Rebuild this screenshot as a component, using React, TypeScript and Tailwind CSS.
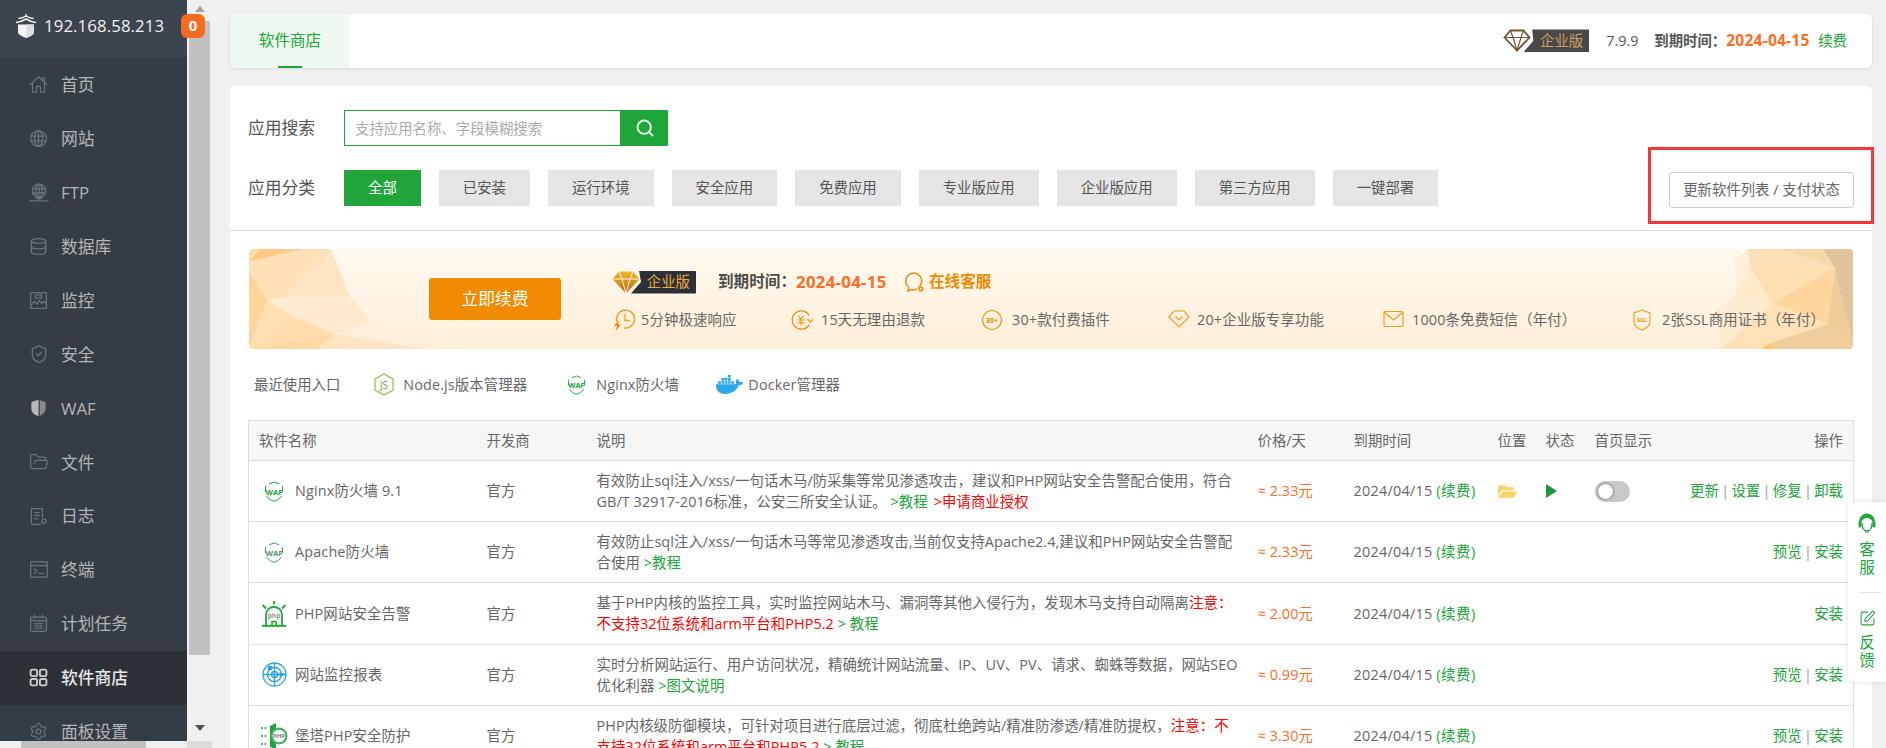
import React from "react";
import { Search, ShieldCheck, FolderOpen, Settings, Database, SquarePen } from "lucide-react";
import { FaFolderOpen, FaDocker } from "react-icons/fa";

const G = "#20a53a";
const O = "#f59a23";

const stroke = { fill: "none", stroke: "currentColor", strokeWidth: 1.6, strokeLinejoin: "round" as const, strokeLinecap: "round" as const };

function HomeI() {
  return (
    <svg width="19" height="19" viewBox="0 0 24 24" {...stroke}>
      <path d="M1.5 12 12 2.5 22.5 12M16.5 6.5V3.5H19.5V9.5M4.5 10.5V21.5H9.5V14.5H14.5V21.5H19.5V10.5" />
    </svg>
  );
}
function GlobeI() {
  return (
    <svg width="19" height="19" viewBox="0 0 24 24" {...stroke}>
      <circle cx="12" cy="12" r="10" />
      <ellipse cx="12" cy="12" rx="5" ry="10" />
      <path d="M12 2V22M2.5 9H21.5M2.5 15H21.5" />
    </svg>
  );
}
function FtpI() {
  return (
    <svg width="20" height="20" viewBox="0 0 24 24" {...stroke}>
      <circle cx="12" cy="9.5" r="8" />
      <ellipse cx="12" cy="9.5" rx="4" ry="8" />
      <path d="M12 1.5V21M4 7H20M4 12H20M1 21.5H23" />
      <path d="M8 18.5H16" />
    </svg>
  );
}
function MonitorI() {
  return (
    <svg width="19" height="19" viewBox="0 0 24 24" {...stroke}>
      <rect x="2" y="2" width="20" height="20" />
      <path d="M2 18 7 13 10 17 13 12 16 16 19 13 22 16" />
      <rect x="8" y="5" width="8" height="4" />
    </svg>
  );
}
function WafI() {
  return (
    <svg width="19" height="20" viewBox="0 0 24 24">
      <path d="M12 1.5 3 4.5V13c0 4.5 4 8 9 9.5Z" fill="#b5b8ba" />
      <path d="M13.5 1.8 21 4.5V13c0 4-3 7.2-7.5 9Z" fill="#85898d" />
    </svg>
  );
}
function LogI() {
  return (
    <svg width="19" height="19" viewBox="0 0 24 24" {...stroke}>
      <path d="M15 22H5a2 2 0 0 1-2-2V2h14v11" />
      <path d="M7 7H13M7 11H13M7 15H11" />
      <circle cx="19" cy="18" r="2.6" />
    </svg>
  );
}
function TermI() {
  return (
    <svg width="20" height="19" viewBox="0 0 24 24" {...stroke}>
      <rect x="1.5" y="2.5" width="21" height="19" />
      <path d="M1.5 7H22.5" />
      <path d="M6 11 9.5 14 6 17M12 17H18" />
    </svg>
  );
}
function CalI() {
  return (
    <svg width="19" height="19" viewBox="0 0 24 24" {...stroke}>
      <rect x="2" y="4" width="20" height="18" rx="2" />
      <path d="M7 1.5V5M17 1.5V5M2 8.5H22" />
      <path d="M6 12H18M6 15H18M6 18H18M9 11V19M12 11V19M15 11V19" strokeWidth="1" />
    </svg>
  );
}
function GridI() {
  return (
    <svg width="19" height="19" viewBox="0 0 24 24" fill="none" stroke="currentColor" strokeWidth="2.4">
      <rect x="2" y="2" width="8.2" height="8.2" rx="2" />
      <rect x="13.8" y="2" width="8.2" height="8.2" rx="2" />
      <rect x="2" y="13.8" width="8.2" height="8.2" rx="2" />
      <rect x="13.8" y="13.8" width="8.2" height="8.2" rx="2" />
    </svg>
  );
}

const menu: { label: string; icon: React.ReactNode; active?: boolean }[] = [
  { label: "首页", icon: <HomeI /> },
  { label: "网站", icon: <GlobeI /> },
  { label: "FTP", icon: <FtpI /> },
  { label: "数据库", icon: <Database size={19} strokeWidth={1.7} /> },
  { label: "监控", icon: <MonitorI /> },
  { label: "安全", icon: <ShieldCheck size={20} strokeWidth={1.6} /> },
  { label: "WAF", icon: <WafI /> },
  { label: "文件", icon: <FolderOpen size={20} strokeWidth={1.5} /> },
  { label: "日志", icon: <LogI /> },
  { label: "终端", icon: <TermI /> },
  { label: "计划任务", icon: <CalI /> },
  { label: "软件商店", icon: <GridI />, active: true },
  { label: "面板设置", icon: <Settings size={19} strokeWidth={1.5} /> },
];

function Logo() {
  return (
    <svg width="22" height="24" viewBox="0 0 22 24" className="shrink-0">
      <path d="M3 10.5 H19 V18.5 C19 20.5 14 23 11 24 C8 23 3 20.5 3 18.5 Z" fill="#f4f4f4" />
      <path d="M11.5 10.5 H19 V18.5 C19 20.5 14.5 23 11.5 24 Z" fill="#dcdde0" />
      <path d="M1 8.5 Q6 8 11 5 Q16 8 21 8.5" fill="none" stroke="#f4f4f4" strokeWidth="1.5" />
      <path d="M3.5 4.5 Q8 4 11 2 Q14 4 18.5 4.5" fill="none" stroke="#f4f4f4" strokeWidth="1.3" />
      <path d="M11 0V2" stroke="#f4f4f4" strokeWidth="1.2" />
    </svg>
  );
}

function Sidebar() {
  return (
    <aside className="relative flex w-[212px] shrink-0 flex-col">
      <div className="flex min-h-0 flex-1">
        <nav className="flex w-[187px] flex-col overflow-hidden bg-[#353d44]">
          <div className="flex h-[58px] shrink-0 items-center gap-[7px] bg-[#3c444d] pl-[15px] pb-[6px] text-[16.8px] text-[#f2f2f2]">
            <Logo />
            <span className="tracking-[0.1px]">192.168.58.213</span>
          </div>
          {menu.map((m) => (
            <div
              key={m.label}
              className={`flex h-[53.9px] shrink-0 items-center pl-[29px] text-[16.8px] ${
                m.active ? "bg-[#2c3138] font-medium text-[#e6e6e6]" : "text-[#b3b6b9]"
              }`}
            >
              <span className={`flex w-[32px] shrink-0 ${m.active ? "text-[#c9cbcd]" : "text-[#6c7277]"}`}>{m.icon}</span>
              <span>{m.label}</span>
            </div>
          ))}
        </nav>
        <div className="ml-[2px] flex w-[21px] flex-col items-center justify-between pt-[6px] pb-[10px]">
          <div className="flex w-full flex-col items-center">
            <div className="h-0 w-0 border-x-[5.5px] border-b-[6px] border-x-transparent border-b-[#a3a3a3]" />
            <div className="mt-[9px] h-[634px] w-full bg-[#c1c1c1]" />
          </div>
          <div className="h-0 w-0 border-x-[5.5px] border-t-[6px] border-x-transparent border-t-[#505050]" />
        </div>
      </div>
      <div className="flex h-[7px] shrink-0">
        <div className="w-[187px] bg-[#f0f0f0] pl-[21px]">
          <div className="h-full w-[125px] bg-[#c1c1c1]" />
        </div>
        <div className="w-[25px] bg-[#dcdcdc]" />
      </div>
      <div className="absolute left-[181px] top-[14px] flex h-[24px] w-[24px] items-center justify-center rounded-[6px] bg-[#f96b22] pb-[2px] text-[15px] font-bold text-white">
        0
      </div>
    </aside>
  );
}

function TopDiamond() {
  return (
    <div className="flex h-[23px] w-[86px] items-stretch">
      <svg width="28" height="23" viewBox="0 0 28 23" className="relative z-10 shrink-0" fill="#fff" stroke="#6e5632" strokeWidth="1.8">
        <path d="M7.5 1.5H20.5L26.5 8.5 14 21.5 1.5 8.5Z" />
        <path d="M1.5 8.5H26.5M7.5 1.5 10 8.5 14 21.5 18 8.5 20.5 1.5" fill="none" strokeWidth="1.2" />
      </svg>
      <div className="-ml-[8px] flex flex-1 items-center justify-end bg-[#494846] pr-[6px] text-[14.4px] text-[#c9a063] [clip-path:polygon(9px_0,100%_0,100%_100%,0_100%,10px_50%)]">
        企业版
      </div>
    </div>
  );
}

function BannerDiamond() {
  return (
    <div className="flex h-[23px] w-[84px] items-stretch">
      <svg width="28" height="23" viewBox="0 0 28 23" className="relative z-10 shrink-0">
        <defs>
          <linearGradient id="gold" x1="0" y1="0" x2="0" y2="1">
            <stop offset="0" stopColor="#f7b52f" />
            <stop offset="1" stopColor="#b06d0a" />
          </linearGradient>
        </defs>
        <path d="M7 0.5H21L27.5 8 14 22.5 0.5 8Z" fill="url(#gold)" />
        <path d="M0.5 8H27.5M7 0.5 10 8 14 22.5 18 8 21 0.5" fill="none" stroke="#fff" strokeWidth="0.9" />
      </svg>
      <div className="-ml-[9px] flex flex-1 items-center justify-end rounded-r-[1px] bg-[#2c3038] pr-[6px] text-[14.4px] text-[#eba933] [clip-path:polygon(8px_0,100%_0,100%_100%,0_100%,10px_50%)]">
        企业版
      </div>
    </div>
  );
}

function BannerArtLeft() {
  return (
    <svg width="176" height="100" viewBox="0 0 176 100" className="absolute left-0 top-0">
      <path d="M0 0H11L0 13Z" fill="#ffdfae" />
      <path d="M0 13 11 0H54Z" fill="#ffc885" />
      <path d="M0 13 54 0H82L36 48 18 51 0 23Z" fill="#ffe0b6" />
      <path d="M82 0 101 48H36Z" fill="#ffe5c4" />
      <path d="M0 23 18 51 0 100Z" fill="#ffd49b" />
      <path d="M18 51 36 48 101 48 44 68Z" fill="#ffebd2" />
      <path d="M44 68 101 48 122 72 86 85Z" fill="#ffe8cc" />
      <path d="M18 51 44 68 0 100Z" fill="#ffdfb2" />
      <path d="M44 68 86 85 0 100Z" fill="#ffdcab" />
      <path d="M0 100 86 85 69 100Z" fill="#ffd8a4" />
      <path d="M86 85 69 100H98Z" fill="#ffe4bf" />
      <path d="M86 85 122 72 174 100Z" fill="#ffeeda" />
      <path d="M86 85 174 100H98Z" fill="#ffe5c5" />
    </svg>
  );
}

function BannerArtRight() {
  return (
    <svg width="139" height="100" viewBox="0 0 139 100" className="absolute right-0 top-0">
      <g transform="translate(5 0)">
        <path d="M16 11 29 0 31 19 16 46Z" fill="#fff0dc" />
        <path d="M29 0H60L116 19H31Z" fill="#fbe0b6" />
        <path d="M60 0H104L116 19Z" fill="#f6d9ab" />
        <path d="M31 19H116L53 54Z" fill="#fedfb2" />
        <path d="M116 19 109 75 53 54Z" fill="#fed59a" />
        <path d="M16 46 31 19 53 54Z" fill="#fee9c9" />
        <path d="M-4 63 16 46 53 54 3 100Z" fill="#ffebd0" />
        <path d="M53 54 109 75 51 94 43 100H3Z" fill="#ffe1b8" />
        <path d="M43 100 51 94 61 100Z" fill="#ffc66f" />
        <path d="M51 94 109 75 134 93V100H61Z" fill="#efcd9c" />
        <path d="M116 19 118 33 134 93 109 75Z" fill="#eecb97" />
        <path d="M104 0H134V93L118 33 116 19Z" fill="#dfc49c" />
      </g>
    </svg>
  );
}

function F1() {
  return (
    <svg width="24" height="24" viewBox="0 0 24 24" fill="none" stroke={O} strokeWidth="1.3">
      <path d="M5 14A9 9 0 1 1 12 20" />
      <path d="M13 6V12.5H18" />
      <path d="M7 12 2 18H5L3.5 23 9 16.5H6Z" fill="#f08a00" stroke="none" />
    </svg>
  );
}
function F2() {
  return (
    <svg width="22" height="22" viewBox="0 0 24 24" fill="none" stroke="#f08a00" strokeWidth="1.3">
      <path d="M20 7A10 10 0 1 0 20 17" />
      <path d="M8 7.5 11 11 14 7.5M7 12H15M7 15H15M11 11V18" strokeWidth="1.1" />
      <path d="M18 11 21 14 24 11" />
    </svg>
  );
}
function F3() {
  return (
    <svg width="22" height="22" viewBox="0 0 22 22" fill="none">
      <circle cx="11" cy="11" r="9.5" stroke="#f08a00" strokeWidth="1.1" />
      <text x="11" y="13.5" textAnchor="middle" fontSize="7" fontWeight="700" fill="#f08a00">30+</text>
    </svg>
  );
}
function F4() {
  return (
    <svg width="22" height="20" viewBox="0 0 22 20" fill="none" stroke={O} strokeWidth="1.2">
      <path d="M6 2H16L21 8 11 18 1 8Z" />
      <path d="M7.5 7.5 11 11 14.5 7.5" />
    </svg>
  );
}
function F5() {
  return (
    <svg width="21" height="18" viewBox="0 0 21 18" fill="none" stroke={O} strokeWidth="1.2">
      <rect x="1" y="1.5" width="19" height="15" rx="1" />
      <path d="M1 2 10.5 10 20 2" />
    </svg>
  );
}
function F6() {
  return (
    <svg width="20" height="22" viewBox="0 0 20 22" fill="none">
      <path d="M10 1 18 4V13C18 17 13 20 10 21 7 20 2 17 2 13V4Z" stroke={O} strokeWidth="1.1" />
      <text x="10" y="13" textAnchor="middle" fontSize="6" fontWeight="700" fill={O}>SSL</text>
    </svg>
  );
}

const feats: { w: string; pad: string; icon: React.ReactNode; text: string }[] = [
  { w: "w-[179px]", pad: "w-[29px]", icon: <F1 />, text: "5分钟极速响应" },
  { w: "w-[190px]", pad: "w-[30px]", icon: <F2 />, text: "15天无理由退款" },
  { w: "w-[187px]", pad: "w-[31px]", icon: <F3 />, text: "30+款付费插件" },
  { w: "w-[215px]", pad: "w-[29px]", icon: <F4 />, text: "20+企业版专享功能" },
  { w: "w-[249px]", pad: "w-[29px]", icon: <F5 />, text: "1000条免费短信（年付）" },
  { w: "w-[200px]", pad: "w-[30px]", icon: <F6 />, text: "2张SSL商用证书（年付）" },
];

function Banner() {
  return (
    <div className="relative mx-px mt-[18px] flex h-[100px] items-center overflow-hidden rounded-[4px] bg-gradient-to-b from-[#fff9f0] to-[#ffefd8]">
      <BannerArtLeft />
      <BannerArtRight />
      <div className="relative ml-[180px] flex h-[42px] w-[132px] shrink-0 items-center justify-center rounded-[3px] bg-[#f08a00] text-[16.8px] text-white">
        立即续费
      </div>
      <div className="relative ml-[51px] flex flex-col gap-[15px] pt-[3px]">
        <div className="flex h-[23px] items-center">
          <BannerDiamond />
          <span className="ml-[22px] w-[78px] text-[15.6px] font-bold text-[#4d4d4d]">到期时间：</span>
          <span className="w-[107px] text-[16.8px] font-bold tracking-[0.3px] text-[#fc6d26]">2024-04-15</span>
          <svg width="24" height="22" viewBox="0 0 24 22" fill="none" stroke="#f08a00" strokeWidth="1.5">
            <path d="M6 16.5A8 8 0 1 1 15.5 16.5" />
            <path d="M6 16.5 5 20 8.5 18.5C10.5 19.3 12.5 19 14.5 17.5" />
            <circle cx="18" cy="18" r="1.8" />
          </svg>
          <span className="ml-[2px] text-[15.6px] font-semibold text-[#f08a00]">在线客服</span>
        </div>
        <div className="flex h-[22px] items-center">
          {feats.map((f) => (
            <div key={f.text} className={`flex shrink-0 items-center ${f.w}`}>
              <span className={`flex shrink-0 ${f.pad}`}>{f.icon}</span>
              <span className="whitespace-nowrap text-[14.4px] tracking-[0.15px] text-[#666]">{f.text}</span>
            </div>
          ))}
        </div>
      </div>
    </div>
  );
}

function WafIcon({ size = 20, dark = false }: { size?: number; dark?: boolean }) {
  const c = dark ? "#4d9a62" : G;
  return (
    <svg width={size} height={size + 1} viewBox="0 0 20 21" fill="none">
      <path d="M5 2.8 10 1 15 2.8M18.5 5V11M17.5 15C16 17.5 13 19.5 10 20.3 7 19.5 4 17.5 2.5 15M1.5 11V5" stroke={c} strokeWidth="1" />
      <text x="10" y="13.5" textAnchor="middle" fontSize="7.8" fontWeight="700" fill={c} fontFamily="Open Sans">WAF</text>
    </svg>
  );
}

function JsIcon() {
  return (
    <svg width="20" height="23" viewBox="0 0 20 23" fill="none">
      <path d="M10 1 19 6V17L10 22 1 17V6Z" stroke="#8cc84b" strokeWidth="1.3" />
      <text x="10" y="15.5" textAnchor="middle" fontSize="10" fill="#6da53a" fontFamily="Open Sans">JS</text>
    </svg>
  );
}

function PhpAlarm() {
  return (
    <svg width="26" height="27" viewBox="0 0 26 27" fill="none" stroke={G}>
      <path d="M5 25V15C5 10 8.5 7 13 7 17.5 7 21 10 21 15V25" strokeWidth="1.8" />
      <path d="M1 25.8H25" strokeWidth="2" />
      <path d="M13 1V4.5M1.5 5 5 8.5M24.5 5 21 8.5" strokeWidth="1.8" />
      <path d="M11 26V21.5H15V26" strokeWidth="1.5" />
      <text x="13" y="18" textAnchor="middle" fontSize="6.5" fontWeight="700" fill="#8a9a8a" stroke="none" fontFamily="Open Sans">php</text>
    </svg>
  );
}

function Radar() {
  return (
    <svg width="25" height="25" viewBox="0 0 25 25" fill="none" stroke="#2aa1e3" strokeWidth="1.3">
      <circle cx="12.5" cy="12.5" r="11.5" />
      <circle cx="12.5" cy="12.5" r="7" />
      <circle cx="12.5" cy="12.5" r="3" />
      <path d="M12.5 1V24M1 12.5H24" />
      <circle cx="8" cy="6" r="1.8" fill="#2aa1e3" />
      <path d="M18 11 23 12.5 18 14Z" fill="#2aa1e3" />
    </svg>
  );
}

function PhpGuard() {
  return (
    <svg width="28" height="26" viewBox="0 0 28 26" fill="none">
      <path d="M1 5H8M1 13H8M1 21H8" stroke={G} strokeWidth="1.5" strokeDasharray="2 1.5" />
      <path d="M10 3 16 0V26L10 24Z" fill={G} />
      <circle cx="19" cy="13" r="8.5" fill="#3fb55a" />
      <circle cx="19" cy="13" r="6.3" fill="#fff" />
      <text x="19" y="15.2" textAnchor="middle" fontSize="6" fontWeight="700" fill="#777" fontFamily="Open Sans">PHP</text>
    </svg>
  );
}

function GreenA({ children }: { children: React.ReactNode }) {
  return <span className="text-[#20a53a]">{children}</span>;
}
function Red({ children }: { children: React.ReactNode }) {
  return <span className="text-[#ff0000]">{children}</span>;
}

function Sep() {
  return <span className="inline-block w-[12.6px] text-center text-[#999]">|</span>;
}

function Actions({ items }: { items: string[] }) {
  return (
    <span className="text-[#20a53a]">
      {items.map((t, i) => (
        <React.Fragment key={t}>
          {i > 0 && <Sep />}
          {t}
        </React.Fragment>
      ))}
    </span>
  );
}

const rows: { icon: React.ReactNode; name: string; desc: React.ReactNode; price: string; actions: string[]; installed?: boolean }[] = [
  {
    icon: <WafIcon />,
    name: "Nginx防火墙 9.1",
    desc: (
      <>
        有效防止sql注入/xss/一句话木马/防采集等常见渗透攻击，建议和PHP网站安全告警配合使用，符合
        <br />
        GB/T 32917-2016标准，公安三所安全认证。 <GreenA>&gt;教程</GreenA>{" "}
        <span className="ml-[2px] text-[#ff0000]">&gt;申请商业授权</span>
      </>
    ),
    price: "≈ 2.33元",
    actions: ["更新", "设置", "修复", "卸载"],
    installed: true,
  },
  {
    icon: <WafIcon dark />,
    name: "Apache防火墙",
    desc: (
      <>
        有效防止sql注入/xss/一句话木马等常见渗透攻击,当前仅支持Apache2.4,建议和PHP网站安全告警配
        <br />
        合使用 <GreenA>&gt;教程</GreenA>
      </>
    ),
    price: "≈ 2.33元",
    actions: ["预览", "安装"],
  },
  {
    icon: <PhpAlarm />,
    name: "PHP网站安全告警",
    desc: (
      <>
        基于PHP内核的监控工具，实时监控网站木马、漏洞等其他入侵行为，发现木马支持自动隔离<Red>注意：</Red>
        <br />
        <Red>不支持32位系统和arm平台和PHP5.2</Red> <GreenA>&gt; 教程</GreenA>
      </>
    ),
    price: "≈ 2.00元",
    actions: ["安装"],
  },
  {
    icon: <Radar />,
    name: "网站监控报表",
    desc: (
      <>
        实时分析网站运行、用户访问状况，精确统计网站流量、IP、UV、PV、请求、蜘蛛等数据，网站SEO
        <br />
        优化利器 <GreenA>&gt;图文说明</GreenA>
      </>
    ),
    price: "≈ 0.99元",
    actions: ["预览", "安装"],
  },
  {
    icon: <PhpGuard />,
    name: "堡塔PHP安全防护",
    desc: (
      <>
        PHP内核级防御模块，可针对项目进行底层过滤，彻底杜绝跨站/精准防渗透/精准防提权，<Red>注意：不</Red>
        <br />
        <Red>支持32位系统和arm平台和PHP5.2</Red> <GreenA>&gt; 教程</GreenA>
      </>
    ),
    price: "≈ 3.30元",
    actions: ["预览", "安装"],
  },
];

const heads = ["软件名称", "开发商", "说明", "价格/天", "到期时间", "位置", "状态", "首页显示"];

function Table() {
  return (
    <table className="w-full table-fixed border-collapse border border-[#ddd] text-[14.4px] text-[#666]">
      <colgroup>
        <col className="w-[228px]" />
        <col className="w-[110px]" />
        <col className="w-[661px]" />
        <col className="w-[96px]" />
        <col className="w-[144px]" />
        <col className="w-[48px]" />
        <col className="w-[49px]" />
        <col className="w-[90px]" />
        <col />
      </colgroup>
      <thead>
        <tr className="h-[40px] border-b border-[#ddd] bg-[#f6f6f6]">
          {heads.map((h) => (
            <th key={h} className="whitespace-nowrap px-[10px] text-left font-normal">
              {h}
            </th>
          ))}
          <th className="px-[10px] text-right font-normal">操作</th>
        </tr>
      </thead>
      <tbody>
        {rows.map((r) => (
          <tr key={r.name} className="h-[61.2px] border-b border-[#ddd]">
            <td className="px-[10px]">
              <div className="flex items-center">
                <span className="flex w-[36px] shrink-0 justify-center pr-[6px]">{r.icon}</span>
                <span className="whitespace-nowrap tracking-[0.15px]">{r.name}</span>
              </div>
            </td>
            <td className="px-[10px]">官方</td>
            <td className="whitespace-nowrap px-[10px] leading-[21px] tracking-[0.08px]">{r.desc}</td>
            <td className="px-[10px] tracking-[0.1px] text-[#fc6d26]">{r.price}</td>
            <td className="whitespace-nowrap px-[10px]">
              <span className="tracking-[0.25px]">2024/04/15</span>{" "}
              <span className="tracking-[0.6px] text-[#20a53a]">(续费)</span>
            </td>
            <td className="px-[10px]">{r.installed && <FaFolderOpen size={19} color="#f0d868" />}</td>
            <td className="px-[10px]">
              {r.installed && (
                <svg width="11" height="14" viewBox="0 0 11 14">
                  <path d="M0 0 11 7 0 14Z" fill="#1c9a3a" />
                </svg>
              )}
            </td>
            <td className="px-[10px]">
              {r.installed && (
                <div className="flex h-[21px] w-[35px] items-center rounded-full bg-[#c9c9c9] pl-[3px]">
                  <div className="h-[15px] w-[15px] rounded-full bg-white shadow-[0_0_2px_1px_#8a8a8a]" />
                </div>
              )}
            </td>
            <td className="whitespace-nowrap px-[10px] text-right">
              <Actions items={r.actions} />
            </td>
          </tr>
        ))}
      </tbody>
    </table>
  );
}

const cats = ["全部", "已安装", "运行环境", "安全应用", "免费应用", "专业版应用", "企业版应用", "第三方应用", "一键部署"];

function Headset() {
  return (
    <svg width="18" height="20" viewBox="0 0 18 20">
      <path d="M1 10C1 4 4.5 0.5 9 0.5 13.5 0.5 17 4 17 10V12H15C15 7 12 5 9 5 6 5 3 7 3 12H1Z" fill={G} />
      <path d="M4 10C4 15 6 18 9 18 12 18 14 15 14 10" fill="none" stroke={G} strokeWidth="1.3" />
      <rect x="0.5" y="8.5" width="3" height="6" rx="1.5" fill={G} />
      <rect x="14.5" y="8.5" width="3" height="6" rx="1.5" fill={G} />
      <path d="M7 19H11" stroke={G} strokeWidth="1" />
    </svg>
  );
}

function FloatBar() {
  return (
    <div className="absolute right-0 top-[502px] flex h-[180px] w-[38px] flex-col items-center rounded-l-[5px] bg-white pt-[11px] text-[15.6px] leading-[18px] text-[#20a53a] shadow-[0_0_5px_rgba(0,0,0,0.12)]">
      <Headset />
      <span className="mt-[7px]">客</span>
      <span>服</span>
      <div className="mb-[17px] ml-[6px] mt-[16px] h-px w-[22px] shrink-0 bg-[#e4e4e4]" />
      <SquarePen size={17} strokeWidth={1.5} />
      <span className="mt-[6px]">反</span>
      <span>馈</span>
    </div>
  );
}

export default function App() {
  return (
    <div className="relative flex h-[748px] w-[1886px] overflow-hidden bg-[#f0f0f0] font-['Open_Sans','Noto_Sans_CJK_SC',sans-serif]">
      <Sidebar />
      <main className="flex min-w-0 flex-1 flex-col gap-[18px] pl-[18px] pr-[14px] pt-[14px]">
        <header className="flex h-[54px] shrink-0 items-center overflow-hidden rounded-[5px] bg-white shadow-[0_1px_3px_rgba(0,0,0,0.1)]">
          <div className="flex h-full w-[120px] items-center justify-center bg-[#eff8f1] text-[15.6px] text-[#20a53a]">
            <span className="relative flex h-full items-center justify-center">
              软件商店
              <span className="absolute bottom-0 left-1/2 h-[2px] w-[24px] -translate-x-1/2 bg-[#20a53a]" />
            </span>
          </div>
          <div className="ml-auto flex items-center pr-[25px]">
            <TopDiamond />
            <span className="ml-[17px] w-[48px] text-[14.4px] text-[#555]">7.9.9</span>
            <span className="text-[14.4px] font-semibold text-[#555]">到期时间：</span>
            <span className="w-[92px] text-[15.6px] font-bold tracking-[0.2px] text-[#fc6d26]">2024-04-15</span>
            <span className="text-[14.4px] text-[#20a53a]">续费</span>
          </div>
        </header>
        <section className="relative flex-1 rounded-t-[5px] bg-white">
          <div className="border-b border-[#ddd] px-[18px] pb-[24px] pt-[24px]">
            <div className="flex h-[36px] items-center">
              <span className="w-[96px] text-[16.8px] text-[#555]">应用搜索</span>
              <div className="flex h-full w-[324px]">
                <input
                  readOnly
                  placeholder="支持应用名称、字段模糊搜索"
                  className="h-full w-[277px] border border-[#20a53a] px-[10px] text-[14.4px] outline-none placeholder:text-[#aaa]"
                />
                <div className="flex h-full flex-1 items-center justify-center bg-[#20a53a] text-[#e4f5e7]">
                  <Search size={20} strokeWidth={2.4} />
                </div>
              </div>
            </div>
            <div className="mt-[24px] flex h-[36px] items-center">
              <span className="w-[96px] text-[16.8px] text-[#555]">应用分类</span>
              <div className="flex h-full gap-[18px]">
                {cats.map((c, i) => (
                  <div
                    key={c}
                    className={`flex h-full items-center px-[24px] text-[14.4px] ${
                      i === 0 ? "bg-[#20a53a] text-white" : "bg-[#e5e5e5] text-[#555]"
                    }`}
                  >
                    {c}
                  </div>
                ))}
              </div>
              <div className="ml-auto mt-[4px] flex h-[36px] w-[185px] items-center justify-center rounded-[3px] border border-[#ccc] text-[14.4px] text-[#666]">
                更新软件列表 / 支付状态
              </div>
            </div>
          </div>
          <div className="px-[18px]">
            <Banner />
            <div className="flex h-[71px] items-center pl-[6px] text-[14.4px] text-[#666]">
              <span>最近使用入口</span>
              <span className="ml-[34px]"><JsIcon /></span>
              <span className="ml-[9px] w-[124px] whitespace-nowrap tracking-[0.1px]">Node.js版本管理器</span>
              <span className="ml-[40px]"><WafIcon size={19} /></span>
              <span className="ml-[10px] w-[84px] whitespace-nowrap tracking-[0.1px]">Nginx防火墙</span>
              <span className="ml-[36px]"><FaDocker size={27} color="#2aa8e8" /></span>
              <span className="ml-[5px] whitespace-nowrap tracking-[0.1px]">Docker管理器</span>
            </div>
            <Table />
          </div>
          <div className="absolute left-[1418px] top-[61px] h-[77px] w-[226px] border-[3px] border-[#f43838]" />
        </section>
      </main>
      <FloatBar />
    </div>
  );
}
